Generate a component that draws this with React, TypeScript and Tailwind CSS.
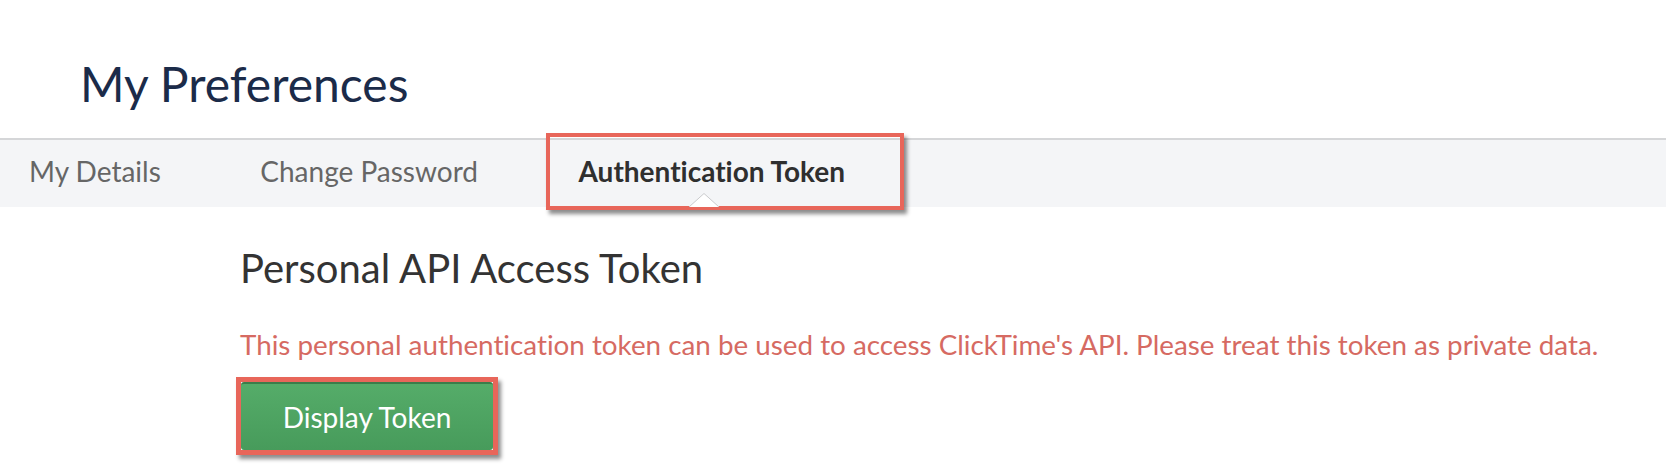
const tabs = ["My Details", "Change Password", "Authentication Token"];

const App = () => {
  const active = "Authentication Token";

  return (
    <div className="min-h-screen w-full bg-white font-['Lato','Liberation_Sans',sans-serif] [font-variant-ligatures:no-common-ligatures]">
      {/* Page title */}
      <h1 className="pl-[80px] pt-[60px] text-[48px] leading-none font-normal text-[#1b2b49]">
        My Preferences
      </h1>

      {/* Tab bar */}
      <nav className="mt-[30px] h-[69px] border-t-2 border-[#d5d6d8] bg-[#f4f5f7] pl-[29px] flex">
        {tabs.map((tab, i) => {
          const isActive = tab === active;
          return (
            <div
              key={tab}
              className={`relative h-full pt-[17px] text-[28px] leading-none ${
                i === 0 ? "pr-[50px]" : "pl-[49.5px] pr-[51px]"
              } ${isActive ? "font-bold text-[#2f2f2f]" : "text-[#666666]"}`}
            >
              {tab}
              {isActive && (
                <>
                  <span className="absolute left-[17.5px] -right-[8px] -top-[7px] -bottom-[3px] border-4 border-[#e8665a] shadow-[3px_4px_4px_rgba(0,0,0,0.45)]" />
                  <svg
                    className="absolute bottom-0 left-[160px]"
                    width="30"
                    height="14"
                    viewBox="0 0 30 14"
                  >
                    <polygon points="0,14 15,0.5 30,14" fill="#ffffff" />
                    <polyline points="0,14 15,0.5 30,14" fill="none" stroke="#c9cacc" strokeWidth="1" />
                  </svg>
                </>
              )}
            </div>
          );
        })}
      </nav>

      {/* Token section */}
      <section className="pl-[236px]">
        <h2 className="ml-[4px] mt-[41px] text-[40px] leading-none font-normal text-[#333333]">
          Personal API Access Token
        </h2>
        <p className="ml-[4px] mt-[43px] text-[27.8px] leading-none text-[#d66a62]">
          This personal authentication token can be used to access ClickTime's API. Please treat this token as
          private data.
        </p>
        <div className="mt-[18px] inline-block border-[5px] border-[#e8665a] shadow-[3px_4px_4px_rgba(0,0,0,0.45)]">
          <button className="flex h-[68px] w-[252px] items-center justify-center rounded-[3px] border-t-2 border-[#3c7d4a] bg-gradient-to-b from-[#55ac69] to-[#479b5b] text-[28px] leading-none text-white">
            Display Token
          </button>
        </div>
      </section>
    </div>
  );
};

export default App;
